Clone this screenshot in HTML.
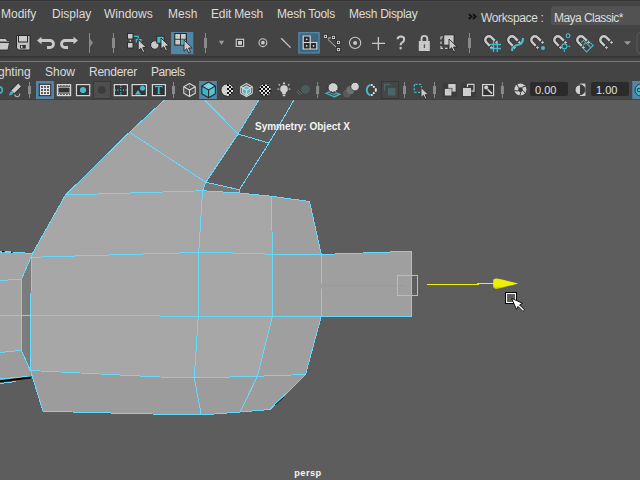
<!DOCTYPE html>
<html><head><meta charset="utf-8">
<style>
*{margin:0;padding:0;box-sizing:border-box}
html,body{width:640px;height:480px;overflow:hidden;background:#444444}
body{position:relative;font-family:"Liberation Sans",sans-serif}
.a{position:absolute}
.mt{position:absolute;top:7px;font-size:12px;color:#dcdcdc;white-space:nowrap;line-height:14px}
.pt{position:absolute;top:65px;font-size:12px;color:#dcdcdc;white-space:nowrap;line-height:14px}
.ws{position:absolute;top:11px;font-size:12px;color:#dcdcdc;white-space:nowrap;line-height:14px}
.num{position:absolute;top:83px;font-size:11px;color:#e0e0e0;white-space:nowrap;line-height:14px}
</style></head><body>
<div class="a" style="left:0;top:0;width:640px;height:1px;background:#333333"></div>
<div class="a" style="left:0;top:1px;width:640px;height:1px;background:#4b4b4b"></div>
<div class="mt" style="left:1px">Modify</div>
<div class="mt" style="left:52px">Display</div>
<div class="mt" style="left:104px">Windows</div>
<div class="mt" style="left:168px">Mesh</div>
<div class="mt" style="left:211px;letter-spacing:-0.15px">Edit Mesh</div>
<div class="mt" style="left:277px;letter-spacing:-0.25px">Mesh Tools</div>
<div class="mt" style="left:349px;letter-spacing:-0.3px">Mesh Display</div>
<div class="ws" style="left:481px;letter-spacing:-0.37px">Workspace :</div>
<div class="a" style="left:551px;top:6px;width:95px;height:19px;background:#525252;border-radius:3px"></div>
<div class="ws" style="left:554px;letter-spacing:-0.55px">Maya Classic*</div>
<div class="a" style="left:0;top:56px;width:640px;height:2px;background:#363636"></div>
<div class="a" style="left:0;top:61px;width:640px;height:1px;background:#7a7a7a"></div>
<div class="pt" style="left:-2px">ghting</div>
<div class="pt" style="left:45px">Show</div>
<div class="pt" style="left:89px;letter-spacing:-0.25px">Renderer</div>
<div class="pt" style="left:151px;letter-spacing:-0.5px">Panels</div>
<div class="a" style="left:530px;top:82px;width:38px;height:13.5px;background:#2b2b2b;border-radius:2px"></div>
<div class="a" style="left:591px;top:82px;width:38px;height:13.5px;background:#2b2b2b;border-radius:2px"></div>
<div class="num" style="left:535px">0.00</div>
<div class="num" style="left:596px">1.00</div>
<div class="a" style="left:0;top:99px;width:640px;height:1px;background:#404040"></div>
<div class="a" style="left:0;top:100px;width:640px;height:380px;background:#5d5d5d"></div>
<svg id="tb" class="a" style="left:0;top:0" width="640" height="100" viewBox="0 0 640 100">
<path d="M-1,38.5 L5.5,38.5 L7,40.5 L9.5,40.5 L9.5,42 L-1,42 Z" fill="#c9c9c9" stroke="#262626" stroke-width="0.8"/>
<path d="M-1,42.5 L9.5,42.5 L8,50 L-1,50 Z" fill="#c9c9c9" stroke="#262626" stroke-width="0.8"/>
<path d="M16.5,35.5 L30,35.5 L30,50 L18.5,50 L16.5,48 Z" fill="#c2c2c2" stroke="#262626" stroke-width="1"/>
<rect x="18.5" y="35.5" width="9" height="6.5" fill="#cccccc" stroke="#262626" stroke-width="1"/>
<rect x="20" y="45" width="5.8" height="3.6" fill="#333"/>
<rect x="21" y="45.7" width="1.4" height="2.2" fill="#ddd"/>
<g><path d="M40,40.5 L50,40.5 A3.5,3.5 0 0 1 50,47.5 L47,47.5" fill="none" stroke="#c9c9c9" stroke-width="2.8"/><path d="M37,40.5 L41.5,36.8 L41.5,44.2 Z" fill="#c9c9c9"/></g>
<g transform="translate(115,0) scale(-1,1)"><g><path d="M40,40.5 L50,40.5 A3.5,3.5 0 0 1 50,47.5 L47,47.5" fill="none" stroke="#c9c9c9" stroke-width="2.8"/><path d="M37,40.5 L41.5,36.8 L41.5,44.2 Z" fill="#c9c9c9"/></g></g>
<line x1="89.5" y1="33" x2="89.5" y2="53" stroke="#8a8a8a" stroke-width="1"/>
<path d="M89.5,38.3 L93,42.8 L89.5,47.4 Z" fill="#8a8a8a"/>
<line x1="113.5" y1="33" x2="113.5" y2="53" stroke="#8a8a8a" stroke-width="1"/>
<rect x="112.0" y="38" width="3" height="10" fill="#8a8a8a"/>
<rect x="127.5" y="33.5" width="5.5" height="5.5" fill="#c9c9c9" stroke="#262626" stroke-width="0.9"/>
<rect x="127.5" y="42.5" width="5.5" height="5.5" fill="#c9c9c9" stroke="#262626" stroke-width="0.9"/>
<rect x="129.6" y="39.8" width="1.4" height="1.8" fill="#c9c9c9"/>
<path d="M134,36.3 L138.2,36.3 L138.2,38.5" fill="none" stroke="#46bccb" stroke-width="1.2"/>
<path d="M136.3,42.5 L136.3,39.6 L141,39.6 L141,41.5" fill="none" stroke="#46bccb" stroke-width="1.2"/>
<path transform="translate(138.2,39.5) scale(1.12)" d="M0,0 L0,10 L2.4,7.8 L4.2,11.6 L5.8,10.9 L4.1,7.2 L7.3,7.1 Z" fill="#c9c9c9" stroke="#262626" stroke-width="0.8" stroke-linejoin="round"/>
<circle cx="154.8" cy="45" r="4.2" fill="#c9c9c9" stroke="#262626" stroke-width="0.9"/>
<rect x="156.8" y="36.2" width="7.3" height="7" fill="#46bccb" stroke="#262626" stroke-width="0.9"/>
<path transform="translate(161,38) scale(1.12)" d="M0,0 L0,10 L2.4,7.8 L4.2,11.6 L5.8,10.9 L4.1,7.2 L7.3,7.1 Z" fill="#c9c9c9" stroke="#262626" stroke-width="0.8" stroke-linejoin="round"/>
<rect x="171" y="32" width="22.3" height="22.2" fill="#5285a6"/>
<rect x="174.3" y="33" width="12.6" height="12.6" fill="#262626"/>
<rect x="175.3" y="34" width="4.8" height="4.8" fill="#c9c9c9"/>
<rect x="181" y="34" width="4.8" height="4.8" fill="#c9c9c9"/>
<rect x="175.3" y="39.7" width="4.8" height="4.8" fill="#c9c9c9"/>
<rect x="181" y="39.7" width="4.8" height="4.8" fill="#c9c9c9"/>
<rect x="181" y="39.7" width="2.2" height="4.8" fill="#46bccb"/>
<path transform="translate(184,40) scale(1.12)" d="M0,0 L0,10 L2.4,7.8 L4.2,11.6 L5.8,10.9 L4.1,7.2 L7.3,7.1 Z" fill="#c9c9c9" stroke="#262626" stroke-width="0.8" stroke-linejoin="round"/>
<line x1="205.5" y1="33" x2="205.5" y2="53" stroke="#8a8a8a" stroke-width="1"/>
<rect x="204.0" y="38" width="3" height="10" fill="#8a8a8a"/>
<path d="M218.8,40.8 L224.2,40.8 L221.5,45 Z" fill="#9a9a9a"/>
<rect x="235.7" y="38.7" width="8.5" height="8.3" fill="#c9c9c9"/>
<rect x="236.9" y="39.9" width="6.1" height="5.9" fill="#262626"/>
<rect x="237.9" y="40.9" width="4.1" height="3.9" fill="#cfcfcf"/>
<circle cx="262.9" cy="42.7" r="3.9" fill="none" stroke="#c9c9c9" stroke-width="1.1"/>
<circle cx="262.9" cy="42.7" r="1.9" fill="#c9c9c9"/>
<line x1="281.2" y1="38.2" x2="290.6" y2="47.6" stroke="#c9c9c9" stroke-width="1.3"/>
<rect x="298.9" y="32.7" width="20.2" height="20.2" fill="#3e6680" stroke="#5285a6" stroke-width="1.4"/>
<path d="M303.2,36 L310.2,36 L310.2,42.5 L316.8,42.5 L316.8,49 L303.2,49 Z" fill="#2a2a2a" stroke="#d8d8d8" stroke-width="1.2"/>
<path d="M303.2,42.5 L310.2,42.5 L310.2,49" fill="none" stroke="#d8d8d8" stroke-width="1.2"/>
<circle cx="306.7" cy="39.3" r="0.9" fill="#ddd"/>
<circle cx="306.7" cy="45.8" r="0.9" fill="#ddd"/>
<circle cx="313.5" cy="45.8" r="0.9" fill="#ddd"/>
<path d="M327,38.5 L331,37.8 M328,39.5 L337.5,48.5" fill="none" stroke="#c9c9c9" stroke-width="0.9"/>
<rect x="323.29999999999995" y="34.3" width="4.2" height="4.2" fill="#c9c9c9" stroke="#262626" stroke-width="0.8"/>
<rect x="324.79999999999995" y="35.8" width="1.2" height="1.2" fill="#262626"/>
<rect x="331.4" y="35.3" width="4.2" height="4.2" fill="#c9c9c9" stroke="#262626" stroke-width="0.8"/>
<rect x="332.9" y="36.8" width="1.2" height="1.2" fill="#262626"/>
<rect x="336.4" y="40.3" width="4.2" height="4.2" fill="#c9c9c9" stroke="#262626" stroke-width="0.8"/>
<rect x="337.9" y="41.8" width="1.2" height="1.2" fill="#262626"/>
<rect x="336.4" y="47.5" width="4.2" height="4.2" fill="#c9c9c9" stroke="#262626" stroke-width="0.8"/>
<rect x="337.9" y="49.0" width="1.2" height="1.2" fill="#262626"/>
<circle cx="355.1" cy="42.9" r="5.6" fill="none" stroke="#c9c9c9" stroke-width="1.1"/>
<circle cx="355.1" cy="42.9" r="2" fill="#c9c9c9"/>
<path d="M372,43.3 L385,43.3 M378.4,37 L378.4,50" stroke="#c9c9c9" stroke-width="1.3"/>
<path d="M397.6,39.3 Q397.8,36.6 400.8,36.6 Q404.2,36.6 404.2,39.6 Q404.2,41.6 401.8,42.8 Q400.6,43.5 400.6,45.3" fill="none" stroke="#c9c9c9" stroke-width="2"/>
<rect x="399.6" y="46.9" width="2.1" height="2.4" fill="#c9c9c9"/>
<path d="M421.5,41.5 L421.5,38.8 A2.9,2.9 0 0 1 427.3,38.8 L427.3,41.5" fill="none" stroke="#c9c9c9" stroke-width="1.9"/>
<rect x="418.8" y="41" width="11" height="10" fill="#c9c9c9"/>
<path d="M424.4,44.3 L424.4,48" stroke="#555" stroke-width="1.3"/>
<path d="M443,37 L441,37 L441,39.5 M441,41.5 L441,44 M441,46 L441,48.3 L443,48.3 M445,48.3 L447.5,48.3" fill="none" stroke="#c9c9c9" stroke-width="1.2"/>
<rect x="443.8" y="34.9" width="10.2" height="10.2" fill="#c9c9c9" stroke="#262626" stroke-width="0.8"/>
<path transform="translate(449,39) scale(1.12)" d="M0,0 L0,10 L2.4,7.8 L4.2,11.6 L5.8,10.9 L4.1,7.2 L7.3,7.1 Z" fill="#c9c9c9" stroke="#262626" stroke-width="0.8" stroke-linejoin="round"/>
<line x1="469.5" y1="33" x2="469.5" y2="53" stroke="#8a8a8a" stroke-width="1"/>
<rect x="468.0" y="38" width="3" height="10" fill="#8a8a8a"/>
<g transform="translate(488.9,39.9) rotate(-45)"><path d="M-3.6,5.2 L-3.6,0 A3.6,3.6 0 0 1 3.6,0 L3.6,5.2" fill="none" stroke="#262626" stroke-width="3.8"/><path d="M-3.6,4.8 L-3.6,0 A3.6,3.6 0 0 1 3.6,0 L3.6,4.8" fill="none" stroke="#c9c9c9" stroke-width="2.5"/><rect x="-4.9" y="5.9" width="2.6" height="2.6" fill="#c9c9c9" stroke="#262626" stroke-width="0.6"/><rect x="2.3" y="5.9" width="2.6" height="2.6" fill="#c9c9c9" stroke="#262626" stroke-width="0.6"/></g>
<path d="M493.5,40.8 L493.5,52 M497.3,40.8 L497.3,52 M490.2,44.5 L501,44.5 M490.2,48.5 L501,48.5" stroke="#46bccb" stroke-width="1.3"/>
<g transform="translate(511.9,39.9) rotate(-45)"><path d="M-3.6,5.2 L-3.6,0 A3.6,3.6 0 0 1 3.6,0 L3.6,5.2" fill="none" stroke="#262626" stroke-width="3.8"/><path d="M-3.6,4.8 L-3.6,0 A3.6,3.6 0 0 1 3.6,0 L3.6,4.8" fill="none" stroke="#c9c9c9" stroke-width="2.5"/><rect x="-4.9" y="5.9" width="2.6" height="2.6" fill="#c9c9c9" stroke="#262626" stroke-width="0.6"/><rect x="2.3" y="5.9" width="2.6" height="2.6" fill="#c9c9c9" stroke="#262626" stroke-width="0.6"/></g>
<path d="M512,51 L512.5,48 Q515,45 519,44.5 Q523,43.5 523,38" fill="none" stroke="#46bccb" stroke-width="2.2"/>
<g transform="translate(534.9,39.9) rotate(-45)"><path d="M-3.6,5.2 L-3.6,0 A3.6,3.6 0 0 1 3.6,0 L3.6,5.2" fill="none" stroke="#262626" stroke-width="3.8"/><path d="M-3.6,4.8 L-3.6,0 A3.6,3.6 0 0 1 3.6,0 L3.6,4.8" fill="none" stroke="#c9c9c9" stroke-width="2.5"/><rect x="-4.9" y="5.9" width="2.6" height="2.6" fill="#c9c9c9" stroke="#262626" stroke-width="0.6"/><rect x="2.3" y="5.9" width="2.6" height="2.6" fill="#c9c9c9" stroke="#262626" stroke-width="0.6"/></g>
<circle cx="543" cy="48" r="2" fill="#46bccb"/>
<g transform="translate(557.9,39.9) rotate(-45)"><path d="M-3.6,5.2 L-3.6,0 A3.6,3.6 0 0 1 3.6,0 L3.6,5.2" fill="none" stroke="#262626" stroke-width="3.8"/><path d="M-3.6,4.8 L-3.6,0 A3.6,3.6 0 0 1 3.6,0 L3.6,4.8" fill="none" stroke="#c9c9c9" stroke-width="2.5"/><rect x="-4.9" y="5.9" width="2.6" height="2.6" fill="#c9c9c9" stroke="#262626" stroke-width="0.6"/><rect x="2.3" y="5.9" width="2.6" height="2.6" fill="#c9c9c9" stroke="#262626" stroke-width="0.6"/></g>
<circle cx="568" cy="35.8" r="1.9" fill="none" stroke="#46bccb" stroke-width="1.1"/>
<circle cx="564.4" cy="46.3" r="2.5" fill="none" stroke="#46bccb" stroke-width="1.2"/>
<path d="M568.5,46.3 L570.2,46.3 M564.4,50 L564.4,51.8" stroke="#46bccb" stroke-width="1.2"/>
<g transform="translate(586.2,45) rotate(45)"><rect x="-5.2" y="-4.6" width="10.4" height="9.2" fill="none" stroke="#46bccb" stroke-width="1.1"/><path d="M-1.8,-4.6 L-1.8,4.6 M-5.2,-1.5 L5.2,-1.5" stroke="#46bccb" stroke-width="1.1"/></g>
<g transform="translate(580.9,39.9) rotate(-45)"><path d="M-3.6,5.2 L-3.6,0 A3.6,3.6 0 0 1 3.6,0 L3.6,5.2" fill="none" stroke="#262626" stroke-width="3.8"/><path d="M-3.6,4.8 L-3.6,0 A3.6,3.6 0 0 1 3.6,0 L3.6,4.8" fill="none" stroke="#c9c9c9" stroke-width="2.5"/><rect x="-4.9" y="5.9" width="2.6" height="2.6" fill="#c9c9c9" stroke="#262626" stroke-width="0.6"/><rect x="2.3" y="5.9" width="2.6" height="2.6" fill="#c9c9c9" stroke="#262626" stroke-width="0.6"/></g>
<g transform="translate(603.9,39.9) rotate(-45)"><path d="M-3.6,5.2 L-3.6,0 A3.6,3.6 0 0 1 3.6,0 L3.6,5.2" fill="none" stroke="#262626" stroke-width="3.8"/><path d="M-3.6,4.8 L-3.6,0 A3.6,3.6 0 0 1 3.6,0 L3.6,4.8" fill="none" stroke="#c9c9c9" stroke-width="2.5"/><rect x="-4.9" y="5.9" width="2.6" height="2.6" fill="#c9c9c9" stroke="#262626" stroke-width="0.6"/><rect x="2.3" y="5.9" width="2.6" height="2.6" fill="#c9c9c9" stroke="#262626" stroke-width="0.6"/></g>
<path d="M624,41.2 L631,41.2 L627.5,45 Z" fill="#9a9a9a"/>
<path d="M640,32.5 Q637,32.5 637,36 L637,50 Q637,53.5 640,53.5" fill="none" stroke="#5a5a5a" stroke-width="1"/>
<path d="M468.8,14.2 L471.5,16.6 L468.8,19 M473,14.2 L475.7,16.6 L473,19" fill="none" stroke="#111" stroke-width="1.8"/>
<circle cx="-1" cy="90" r="3.3" fill="none" stroke="#46bccb" stroke-width="1.4"/>
<line x1="12.8" y1="91.8" x2="19.6" y2="85" stroke="#262626" stroke-width="5.6"/>
<line x1="12.8" y1="91.8" x2="19.6" y2="85" stroke="#cccccc" stroke-width="4"/>
<path d="M9,95.5 L10,92.5 L12,91 L13.5,92.5 L12,94.5 Z" fill="#46bccb"/>
<path d="M14.5,94.5 Q16,97.5 18.5,96.5 Q20.2,95.5 19.5,93.5" fill="none" stroke="#bbbbbb" stroke-width="1.1"/>
<line x1="29.5" y1="82" x2="29.5" y2="98" stroke="#8a8a8a" stroke-width="1"/>
<rect x="28.0" y="86" width="3" height="8" fill="#8a8a8a"/>
<rect x="36" y="81" width="18" height="18" fill="#5285a6"/>
<rect x="39.3" y="84.3" width="11.4" height="11.4" fill="#e6e6e6" stroke="#262626" stroke-width="1"/>
<rect x="41.2" y="86.2" width="1.6" height="1.6" fill="#111"/>
<rect x="41.2" y="89.2" width="1.6" height="1.6" fill="#111"/>
<rect x="41.2" y="92.2" width="1.6" height="1.6" fill="#111"/>
<rect x="44.2" y="86.2" width="1.6" height="1.6" fill="#111"/>
<rect x="44.2" y="89.2" width="1.6" height="1.6" fill="#111"/>
<rect x="44.2" y="92.2" width="1.6" height="1.6" fill="#111"/>
<rect x="47.2" y="86.2" width="1.6" height="1.6" fill="#111"/>
<rect x="47.2" y="89.2" width="1.6" height="1.6" fill="#111"/>
<rect x="47.2" y="92.2" width="1.6" height="1.6" fill="#111"/>
<rect x="57.4" y="84.6" width="13.200000000000006" height="11.000000000000004" fill="#333333" stroke="#d6d6d6" stroke-width="1.2"/>
<rect x="58" y="87.2" width="12" height="5.8" fill="#333" stroke="#d6d6d6" stroke-width="0.9"/>
<rect x="58.6" y="85.2" width="1.6" height="1" fill="#d6d6d6"/>
<rect x="58.6" y="94" width="1.6" height="1" fill="#d6d6d6"/>
<rect x="61.6" y="85.2" width="1.6" height="1" fill="#d6d6d6"/>
<rect x="61.6" y="94" width="1.6" height="1" fill="#d6d6d6"/>
<rect x="64.6" y="85.2" width="1.6" height="1" fill="#d6d6d6"/>
<rect x="64.6" y="94" width="1.6" height="1" fill="#d6d6d6"/>
<rect x="67.6" y="85.2" width="1.6" height="1" fill="#d6d6d6"/>
<rect x="67.6" y="94" width="1.6" height="1" fill="#d6d6d6"/>
<rect x="76.5" y="84.6" width="13.199999999999992" height="11.000000000000004" fill="#333333" stroke="#d6d6d6" stroke-width="1.2"/>
<circle cx="83" cy="90" r="3.1" fill="#46bccb"/>
<rect x="93.5" y="81.5" width="17" height="17" fill="#4e4e4e" stroke="#3a3a3a" stroke-width="1"/>
<circle cx="101.8" cy="89.9" r="3.8" fill="#3b3b3b"/>
<rect x="114.3" y="84.6" width="13.099999999999998" height="11.000000000000004" fill="#333333" stroke="#d6d6d6" stroke-width="1.2"/>
<rect x="114.7" y="89.3" width="1.1" height="1.5" fill="#46bccb"/>
<rect x="117.3" y="89.3" width="1.1" height="1.5" fill="#46bccb"/>
<rect x="120.1" y="89.3" width="1.1" height="1.5" fill="#46bccb"/>
<rect x="122.9" y="89.3" width="1.1" height="1.5" fill="#46bccb"/>
<rect x="125.7" y="89.3" width="1.1" height="1.5" fill="#46bccb"/>
<rect x="120" y="84.9" width="1.5" height="1.0" fill="#46bccb"/>
<rect x="120" y="86.8" width="1.5" height="1.0" fill="#46bccb"/>
<rect x="120" y="92.3" width="1.5" height="1.0" fill="#46bccb"/>
<rect x="120" y="94.3" width="1.5" height="1.0" fill="#46bccb"/>
<rect x="132.1" y="84.6" width="14.3" height="11.000000000000004" fill="#333333" stroke="#d6d6d6" stroke-width="1.2"/>
<path d="M135,94.5 L138,90 L141,94.5 Z" fill="#46bccb"/>
<circle cx="142.5" cy="88.3" r="2.5" fill="#46bccb"/>
<rect x="152.4" y="84.6" width="12.99999999999999" height="11.000000000000004" fill="#333333" stroke="#d6d6d6" stroke-width="1.2"/>
<path d="M155,86 L162.5,86 L162.5,88 L161.8,87.1 L159.6,87.1 L159.6,93.2 L160.8,94 L156.8,94 L157.9,93.2 L157.9,87.1 L155.7,87.1 L155,88 Z" fill="#46bccb"/>
<line x1="173.5" y1="82" x2="173.5" y2="98" stroke="#8a8a8a" stroke-width="1"/>
<rect x="172.0" y="86" width="3" height="8" fill="#8a8a8a"/>
<polygon points="189.50,83.40 195.24,86.70 195.24,93.30 189.50,96.60 183.76,93.30 183.76,86.70" fill="none" stroke="#d6d6d6" stroke-width="1.1" stroke-linejoin="round"/>
<polyline points="183.76,86.70 189.50,90.00 195.24,86.70" fill="none" stroke="#d6d6d6" stroke-width="1.1"/>
<line x1="189.5" y1="90" x2="189.5" y2="96.6" stroke="#d6d6d6" stroke-width="1.1"/>
<path d="M189.5,85.5 L189.5,87.5 M185,92 L186.8,91 M194,92 L192.2,91" stroke="#888" stroke-width="0.9"/>
<rect x="199.1" y="81" width="17.8" height="18" fill="#5285a6"/>
<polygon points="201.81,86.00 208.60,89.90 208.60,97.70 201.81,93.80" fill="#43b3c1"/>
<polygon points="208.60,89.90 215.39,86.00 215.39,93.80 208.60,97.70" fill="#55c5d2"/>
<polygon points="208.60,82.10 215.39,86.00 208.60,89.90 201.81,86.00" fill="#74d6e2"/>
<polygon points="208.60,82.10 215.39,86.00 215.39,93.80 208.60,97.70 201.81,93.80 201.81,86.00" fill="none" stroke="#2a2a2a" stroke-width="1.1" stroke-linejoin="round"/>
<polyline points="201.81,86.00 208.60,89.90 215.39,86.00" fill="none" stroke="#2a2a2a" stroke-width="1.1"/>
<line x1="208.6" y1="89.9" x2="208.6" y2="97.7" stroke="#2a2a2a" stroke-width="1.1"/>
<circle cx="227.1" cy="90" r="6.1" fill="#cfcfcf" stroke="#262626" stroke-width="0.8"/>
<clipPath id="hc"><circle cx="227.1" cy="90" r="6.1"/></clipPath>
<g clip-path="url(#hc)"><rect x="227" y="84" width="2" height="2" fill="#111"/><rect x="227" y="86" width="2" height="2" fill="#ddd"/><rect x="227" y="88" width="2" height="2" fill="#111"/><rect x="227" y="90" width="2" height="2" fill="#ddd"/><rect x="227" y="92" width="2" height="2" fill="#111"/><rect x="227" y="94" width="2" height="2" fill="#ddd"/><rect x="227" y="96" width="2" height="2" fill="#111"/><rect x="229" y="84" width="2" height="2" fill="#ddd"/><rect x="229" y="86" width="2" height="2" fill="#111"/><rect x="229" y="88" width="2" height="2" fill="#ddd"/><rect x="229" y="90" width="2" height="2" fill="#111"/><rect x="229" y="92" width="2" height="2" fill="#ddd"/><rect x="229" y="94" width="2" height="2" fill="#111"/><rect x="229" y="96" width="2" height="2" fill="#ddd"/><rect x="231" y="84" width="2" height="2" fill="#111"/><rect x="231" y="86" width="2" height="2" fill="#ddd"/><rect x="231" y="88" width="2" height="2" fill="#111"/><rect x="231" y="90" width="2" height="2" fill="#ddd"/><rect x="231" y="92" width="2" height="2" fill="#111"/><rect x="231" y="94" width="2" height="2" fill="#ddd"/><rect x="231" y="96" width="2" height="2" fill="#111"/><rect x="233" y="84" width="2" height="2" fill="#ddd"/><rect x="233" y="86" width="2" height="2" fill="#111"/><rect x="233" y="88" width="2" height="2" fill="#ddd"/><rect x="233" y="90" width="2" height="2" fill="#111"/><rect x="233" y="92" width="2" height="2" fill="#ddd"/><rect x="233" y="94" width="2" height="2" fill="#111"/><rect x="233" y="96" width="2" height="2" fill="#ddd"/></g>
<polygon points="240.76,86.70 246.50,90.00 246.50,96.60 240.76,93.30" fill="#3a3a3a"/>
<polygon points="246.50,90.00 252.24,86.70 252.24,93.30 246.50,96.60" fill="#3a3a3a"/>
<polygon points="246.50,83.40 252.24,86.70 246.50,90.00 240.76,86.70" fill="#3a3a3a"/>
<polygon points="246.50,83.40 252.24,86.70 252.24,93.30 246.50,96.60 240.76,93.30 240.76,86.70" fill="none" stroke="#d6d6d6" stroke-width="1.1" stroke-linejoin="round"/>
<polyline points="240.76,86.70 246.50,90.00 252.24,86.70" fill="none" stroke="#d6d6d6" stroke-width="1.1"/>
<line x1="246.5" y1="90" x2="246.5" y2="96.6" stroke="#d6d6d6" stroke-width="1.1"/>
<polygon points="242.50,88.00 246.50,90.30 246.50,94.90 242.50,92.60" fill="#45b8c5"/>
<polygon points="246.50,90.30 250.50,88.00 250.50,92.60 246.50,94.90" fill="#4fc0cd"/>
<polygon points="246.50,85.70 250.50,88.00 246.50,90.30 242.50,88.00" fill="#55c6d3"/>
<polygon points="246.50,85.70 250.50,88.00 250.50,92.60 246.50,94.90 242.50,92.60 242.50,88.00" fill="none" stroke="#d0d0d0" stroke-width="1.1" stroke-linejoin="round"/>
<polyline points="242.50,88.00 246.50,90.30 250.50,88.00" fill="none" stroke="#d0d0d0" stroke-width="1.1"/>
<line x1="246.5" y1="90.3" x2="246.5" y2="94.89999999999999" stroke="#d0d0d0" stroke-width="1.1"/>
<circle cx="265" cy="90" r="6.2" fill="#ddd" stroke="#262626" stroke-width="0.8"/>
<clipPath id="fc"><circle cx="265" cy="90" r="6.1"/></clipPath>
<g clip-path="url(#fc)"><rect x="259" y="84" width="2" height="2" fill="#111"/><rect x="259" y="88" width="2" height="2" fill="#111"/><rect x="259" y="92" width="2" height="2" fill="#111"/><rect x="259" y="96" width="2" height="2" fill="#111"/><rect x="261" y="86" width="2" height="2" fill="#111"/><rect x="261" y="90" width="2" height="2" fill="#111"/><rect x="261" y="94" width="2" height="2" fill="#111"/><rect x="263" y="84" width="2" height="2" fill="#111"/><rect x="263" y="88" width="2" height="2" fill="#111"/><rect x="263" y="92" width="2" height="2" fill="#111"/><rect x="263" y="96" width="2" height="2" fill="#111"/><rect x="265" y="86" width="2" height="2" fill="#111"/><rect x="265" y="90" width="2" height="2" fill="#111"/><rect x="265" y="94" width="2" height="2" fill="#111"/><rect x="267" y="84" width="2" height="2" fill="#111"/><rect x="267" y="88" width="2" height="2" fill="#111"/><rect x="267" y="92" width="2" height="2" fill="#111"/><rect x="267" y="96" width="2" height="2" fill="#111"/><rect x="269" y="86" width="2" height="2" fill="#111"/><rect x="269" y="90" width="2" height="2" fill="#111"/><rect x="269" y="94" width="2" height="2" fill="#111"/><rect x="271" y="84" width="2" height="2" fill="#111"/><rect x="271" y="88" width="2" height="2" fill="#111"/><rect x="271" y="92" width="2" height="2" fill="#111"/><rect x="271" y="96" width="2" height="2" fill="#111"/></g>
<circle cx="284" cy="89" r="3.8" fill="#cfcfcf"/>
<rect x="282.2" y="92" width="3.6" height="2.2" fill="#cfcfcf"/>
<rect x="282.8" y="94.6" width="2.4" height="1.6" fill="#cfcfcf"/>
<rect x="283" y="82.5" width="2" height="1.8" fill="#cfcfcf"/>
<path d="M277.5,89.2 L279.3,89.2 M278.6,84.2 L279.9,85.5" stroke="#bbb" stroke-width="1.2"/>
<path d="M288.6,89.2 L290.4,89.2 M289.4,84.2 L288.1,85.5" stroke="#bbb" stroke-width="1.2"/>
<path d="M296.5,91.5 L300,95 M298,90 L302,94" stroke="#6a6a6a" stroke-width="0.9"/>
<circle cx="305.4" cy="89.3" r="4.4" fill="#4a5b5c"/>
<line x1="317.6" y1="82" x2="317.6" y2="98" stroke="#8a8a8a" stroke-width="1"/>
<rect x="316.1" y="86" width="3" height="8" fill="#8a8a8a"/>
<path d="M326,93.2 L331.5,91 L340,94.2 L334.5,96.8 Z" fill="none" stroke="#46bccb" stroke-width="1.1"/>
<path d="M329,92.3 L336.5,95.5 M332,91.8 L338,94.6" stroke="#46bccb" stroke-width="0.8"/>
<circle cx="333.1" cy="87.7" r="5" fill="#d0d0d0" stroke="#262626" stroke-width="0.8"/>
<path d="M331,91 L332,92.5 M333.8,91 L334.8,92.5 M336.6,90 L337.2,91.3" stroke="#333" stroke-width="0.9"/>
<circle cx="347" cy="93.5" r="4" fill="#5a5a5a"/>
<circle cx="350.5" cy="90" r="4.2" fill="#707070"/>
<circle cx="355" cy="86.6" r="4.3" fill="#d0d0d0" stroke="#262626" stroke-width="0.8"/>
<path d="M370.5,84.8 A5.5,5.5 0 0 0 370.5,95.2" fill="none" stroke="#46bccb" stroke-width="1.9"/>
<rect x="370.90000000000003" y="84.1" width="1.8" height="1.8" fill="#eee"/>
<rect x="372.90000000000003" y="86.0" width="1.8" height="1.8" fill="#eee"/>
<rect x="374.90000000000003" y="88.3" width="1.8" height="1.8" fill="#eee"/>
<rect x="374.90000000000003" y="89.89999999999999" width="1.8" height="1.8" fill="#eee"/>
<rect x="372.90000000000003" y="92.19999999999999" width="1.8" height="1.8" fill="#eee"/>
<rect x="370.90000000000003" y="94.1" width="1.8" height="1.8" fill="#eee"/>
<rect x="381.5" y="81.5" width="17" height="17" fill="#464646" stroke="#383838" stroke-width="1"/>
<rect x="388" y="88" width="7.5" height="7.5" fill="#4a6566"/>
<path d="M384.5,91 L384.5,84.5 L390,84.5" fill="none" stroke="#4a6566" stroke-width="1.3"/>
<line x1="404.5" y1="82" x2="404.5" y2="98" stroke="#8a8a8a" stroke-width="1"/>
<rect x="403.0" y="86" width="3" height="8" fill="#8a8a8a"/>
<rect x="414.3" y="84.3" width="7.2" height="8" rx="1" fill="none" stroke="#46bccb" stroke-width="1.3" stroke-dasharray="2.2,1.4"/>
<path transform="translate(421,87.5) scale(1.0)" d="M0,0 L0,10 L2.4,7.8 L4.2,11.6 L5.8,10.9 L4.1,7.2 L7.3,7.1 Z" fill="#c9c9c9" stroke="#262626" stroke-width="0.8" stroke-linejoin="round"/>
<line x1="434.5" y1="82" x2="434.5" y2="98" stroke="#8a8a8a" stroke-width="1"/>
<rect x="433.0" y="86" width="3" height="8" fill="#8a8a8a"/>
<rect x="442.5" y="82.5" width="14.5" height="15" fill="#3d3d3d"/>
<rect x="448.3" y="84" width="7.3" height="7.6" fill="#cdcdcd"/>
<rect x="444.3" y="88.4" width="7.6" height="7.6" fill="#cdcdcd" stroke="#3d3d3d" stroke-width="1"/>
<rect x="448.3" y="88.6" width="3.2" height="3" fill="#bdbdbd"/>
<rect x="461" y="82.5" width="15.3" height="15" fill="#3d3d3d"/>
<path d="M467.5,87 L467.5,84.3 L474,84.3 L474,91.2 L471.5,91.2" fill="none" stroke="#cdcdcd" stroke-width="1.2"/>
<rect x="463" y="88" width="8" height="8" fill="#cdcdcd"/>
<rect x="482.6" y="84.6" width="10.99999999999999" height="11.000000000000004" fill="#333333" stroke="#d6d6d6" stroke-width="1.2"/>
<line x1="487.6" y1="89.3" x2="492" y2="93.6" stroke="#cfcfcf" stroke-width="1.8"/>
<circle cx="486.2" cy="87.6" r="2" fill="#cfcfcf"/>
<line x1="502.4" y1="82" x2="502.4" y2="98" stroke="#8a8a8a" stroke-width="1"/>
<rect x="500.9" y="86" width="3" height="8" fill="#8a8a8a"/>
<circle cx="520.4" cy="89.6" r="6" fill="#cfcfcf"/>
<path d="M518.6,87.6 L522.2,87.3 L523,90.4 L520.8,92.4 L518,91 Z" fill="#3a3a3a"/>
<path d="M518.6,87.6 L516.5,83.8 M522.2,87.3 L526.2,85.8 M523,90.4 L525.8,94 M520.8,92.4 L519.8,96 M518,91 L514.4,90.6" stroke="#3a3a3a" stroke-width="1"/>
<rect x="579.8" y="83.6" width="5.6" height="12.4" fill="#d0d0d0"/>
<circle cx="580" cy="89.8" r="5" fill="#d0d0d0" stroke="#262626" stroke-width="0.8"/>
<path d="M580,84.8 A5,5 0 0 1 580,94.8 Z" fill="#3a3a3a"/>
<rect x="632.2" y="81" width="10" height="18" fill="#5285a6"/>
<circle cx="641" cy="90" r="6" fill="#46bccb" stroke="#222" stroke-width="0.8"/>
<circle cx="639" cy="90" r="1.8" fill="none" stroke="#222" stroke-width="0.9"/>
</svg>
<svg id="vp" class="a" style="left:0;top:100px" width="640" height="380" viewBox="0 100 640 380">
<polygon fill="#a3a3a3" points="165.5,99 259.5,99 238,134 205.8,182.2 202.5,191 65.5,195 129.5,132.25"/>
<polygon fill="#a7a7a7" points="65.5,195 203,190.75 239.5,193 271.25,196.25 309.5,201.5 321.3,254.5 321.3,316.25 305.5,374.5 270,409.5 240,412 201.25,415 140,413.75 43,411.25 30.5,370.5 31.25,257 32.5,253.5"/>
<polygon fill="#9f9f9f" points="271.25,196.25 309.5,201.5 321.3,254.5 321.3,316.25 305.5,374.5 257.5,376.25 272.5,316.25 272.5,254.25"/>
<polygon fill="#9c9c9c" points="30.5,370.5 160,377 194.25,378 257.5,376.25 305.5,374.5 270,409.5 240,412 201.25,415 140,413.75 43,411.25"/>
<polygon fill="#9f9f9f" points="321.3,254.5 411.25,251.25 411.25,316.25 321.3,316.25"/>
<polygon fill="#a4a4a4" points="0,251.25 32.5,253.5 31.25,257 30.5,376 0,381.5"/>
<polygon fill="#9c9c9c" points="0,352.5 20.8,350.4 30.2,370.2 30.5,376 0,381.5"/>
<polygon fill="#7c7c7c" points="32.5,253.5 21.35,279.4 21,350.4 30.2,370.2 31.25,257"/>
<polygon fill="#767676" points="205.8,182.2 239,189.7 239,193 202.5,191"/>
<line x1="322" y1="285.5" x2="405" y2="285.5" stroke="#999999" stroke-width="1"/>
<polyline fill="none" stroke="#64dbfd" stroke-width="1" stroke-linejoin="round" shape-rendering="crispEdges" points="165.5,99 129.5,132.25 65.5,195 32.5,253.5 21.35,279.4 21.35,350.4 30.2,370.2"/>
<polyline fill="none" stroke="#64dbfd" stroke-width="1" stroke-linejoin="round" shape-rendering="crispEdges" points="259.5,99 238,134 205.8,182.2 202.5,191 198.75,252.5 198.25,316.25 194.25,378 201.25,415"/>
<polyline fill="none" stroke="#64dbfd" stroke-width="1" stroke-linejoin="round" shape-rendering="crispEdges" points="203.75,99 238,134 268.75,143"/>
<polyline fill="none" stroke="#64dbfd" stroke-width="1" stroke-linejoin="round" shape-rendering="crispEdges" points="129.5,132.25 205.8,182.2 239,189.7"/>
<polyline fill="none" stroke="#64dbfd" stroke-width="1" stroke-linejoin="round" shape-rendering="crispEdges" points="294.5,99 268.75,143.5 239.5,189.5 239,193"/>
<polyline fill="none" stroke="#64dbfd" stroke-width="1" stroke-linejoin="round" shape-rendering="crispEdges" points="65.5,195 203,190.75 239.5,193 271.25,196.25 309.5,201.5 321.3,254.5 321.3,316.25 305.5,374.5 270,409.5 240,412 201.25,415 140,413.75 43,411.25 30.5,370.5 31.25,257 32.5,253.5 65.5,195"/>
<polyline fill="none" stroke="#64dbfd" stroke-width="1" stroke-linejoin="round" shape-rendering="crispEdges" points="271.25,196.25 272.5,254.25 272.5,316.25 257.5,376.25 240,412"/>
<polyline fill="none" stroke="#64dbfd" stroke-width="1" stroke-linejoin="round" shape-rendering="crispEdges" points="0,280.4 21.35,279.4"/>
<polyline fill="none" stroke="#64dbfd" stroke-width="1" stroke-linejoin="round" shape-rendering="crispEdges" points="31.25,257.3 160,253.5 198.75,252.5 232.5,253 272.5,254.25 321.3,254.5 411.25,251.25 411.25,316.25 321.3,316.25"/>
<polyline fill="none" stroke="#64dbfd" stroke-width="1" stroke-linejoin="round" shape-rendering="crispEdges" points="0,315.5 160,316 321.3,316.25"/>
<polyline fill="none" stroke="#64dbfd" stroke-width="1" stroke-linejoin="round" shape-rendering="crispEdges" points="0,352.5 20.8,350.4"/>
<polyline fill="none" stroke="#64dbfd" stroke-width="1" stroke-linejoin="round" shape-rendering="crispEdges" points="30.5,370.5 160,377 194.25,378 257.5,376.25 305.5,374.5"/>
<polyline fill="none" stroke="#64dbfd" stroke-width="1" stroke-linejoin="round" shape-rendering="crispEdges" points="0,251.25 32.5,253.5"/>
<polyline fill="none" stroke="#64dbfd" stroke-width="1" stroke-linejoin="round" shape-rendering="crispEdges" points="0,252.25 20,252.8"/>
<polyline fill="none" stroke="#64dbfd" stroke-width="1" stroke-linejoin="round" shape-rendering="crispEdges" points="0,379 31,376"/>
<line x1="0" y1="381.3" x2="31" y2="377.5" stroke="#000" stroke-width="2"/>
<line x1="0" y1="383.5" x2="16" y2="381.5" stroke="#64dbfd" stroke-width="1" shape-rendering="crispEdges"/>
<rect x="2" y="251" width="2.6" height="1.2" fill="#000"/><rect x="11" y="251.8" width="1.6" height="1.1" fill="#000"/>
<line x1="275" y1="405" x2="284" y2="397" stroke="#111" stroke-width="1"/>
<rect x="320.5" y="283.5" width="2" height="5" fill="#a0a0a0"/>
<rect x="397.5" y="275.5" width="20" height="20" fill="none" stroke="#64dbfd" stroke-width="1"/>
<polyline fill="none" stroke="#eeee00" stroke-width="1.1" shape-rendering="crispEdges" points="427,284.5 478,284.5 478,283.5 494,283.5"/>
<path fill="#eeee00" d="M493.2,281 Q493.2,278.6 496.5,278.6 Q507,280.5 518.2,283.4 Q507,286.5 496.5,288.7 Q493.2,288.7 493.2,286 Z"/>
<path fill="#c4c400" opacity="0.6" d="M494,286.5 Q500,287.5 508,285.9 L500,288.3 Q496,288.9 494,287.8 Z"/>
<rect x="505.5" y="292.5" width="11" height="11" fill="none" stroke="#000" stroke-width="1"/>
<rect x="506.5" y="293.5" width="9" height="9" fill="none" stroke="#fff" stroke-width="1"/>
<path d="M511.6,298.3 L522.5,303.3 L519.6,304.9 L524.6,309.9 L523.0,311.4 L518.0,306.4 L516.5,309.4 Z" fill="#fff" stroke="#000" stroke-width="0.9" stroke-linejoin="round"/>
<text x="255" y="130" font-family="Liberation Sans" font-weight="bold" font-size="10" fill="#f4f4f4">Symmetry: Object X</text>
<text x="294.3" y="475.8" font-family="Liberation Sans" font-weight="bold" font-size="9.2" letter-spacing="0.45" fill="#f4f4f4">persp</text>
</svg>
</body></html>
